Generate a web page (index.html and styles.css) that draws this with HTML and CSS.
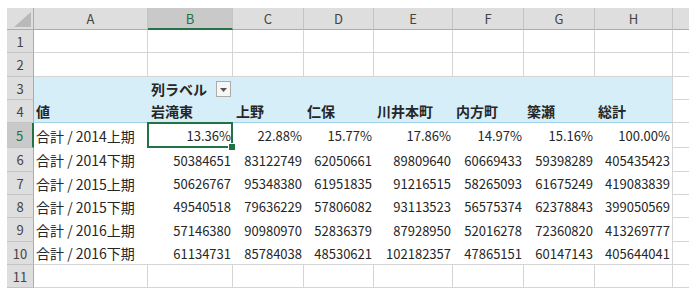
FILE: index.html
```html
<!DOCTYPE html>
<html lang="ja">
<head>
  <meta charset="UTF-8">
  <meta name="viewport" content="width=device-width, initial-scale=1.0">
  <title>ピボットテーブル</title>
  <link rel="stylesheet" href="styles.css">
</head>
<body>
  <div class="sheet">
    <!-- column headers -->
    <div class="corner">
      <svg width="17" height="15" viewBox="0 0 17 15"><polygon points="17,0 17,15 0,15" fill="#b9b9b9"/></svg>
    </div>
    <div class="colhd">A</div>
    <div class="colhd on">B</div>
    <div class="colhd">C</div>
    <div class="colhd">D</div>
    <div class="colhd">E</div>
    <div class="colhd">F</div>
    <div class="colhd">G</div>
    <div class="colhd">H</div>
    <div class="colhd last"></div>

    <!-- row 1 -->
    <div class="rowhd">1</div>
    <div class="c"></div><div class="c"></div><div class="c"></div><div class="c"></div>
    <div class="c"></div><div class="c"></div><div class="c"></div><div class="c"></div>
    <div class="c last"></div>

    <!-- row 2 -->
    <div class="rowhd">2</div>
    <div class="c"></div><div class="c"></div><div class="c"></div><div class="c"></div>
    <div class="c"></div><div class="c"></div><div class="c"></div><div class="c"></div>
    <div class="c last"></div>

    <!-- row 3 : pivot column label -->
    <div class="rowhd">3</div>
    <div class="ph"></div>
    <div class="ph b">列ラベル<span class="dd"><svg width="7" height="4" viewBox="0 0 7 4"><polygon points="0,0 7,0 3.5,4" fill="#555"/></svg></span></div>
    <div class="ph"></div>
    <div class="ph"></div>
    <div class="ph"></div>
    <div class="ph"></div>
    <div class="ph"></div>
    <div class="ph end"></div>
    <div class="c last"></div>

    <!-- row 4 : pivot headings -->
    <div class="rowhd">4</div>
    <div class="ph line b first">値</div>
    <div class="ph line b">岩滝東</div>
    <div class="ph line b">上野</div>
    <div class="ph line b">仁保</div>
    <div class="ph line b">川井本町</div>
    <div class="ph line b">内方町</div>
    <div class="ph line b">簗瀬</div>
    <div class="ph line b end">総計</div>
    <div class="c last"></div>

    <!-- row 5 -->
    <div class="rowhd on">5</div>
    <div class="pv first">合計 / 2014上期</div>
    <div class="pv n sel">13.36%</div>
    <div class="pv n">22.88%</div>
    <div class="pv n">15.77%</div>
    <div class="pv n">17.86%</div>
    <div class="pv n">14.97%</div>
    <div class="pv n">15.16%</div>
    <div class="pv n end">100.00%</div>
    <div class="c last"></div>

    <!-- row 6 -->
    <div class="rowhd">6</div>
    <div class="pv first">合計 / 2014下期</div>
    <div class="pv n">50384651</div>
    <div class="pv n">83122749</div>
    <div class="pv n">62050661</div>
    <div class="pv n">89809640</div>
    <div class="pv n">60669433</div>
    <div class="pv n">59398289</div>
    <div class="pv n end">405435423</div>
    <div class="c last"></div>

    <!-- row 7 -->
    <div class="rowhd">7</div>
    <div class="pv first">合計 / 2015上期</div>
    <div class="pv n">50626767</div>
    <div class="pv n">95348380</div>
    <div class="pv n">61951835</div>
    <div class="pv n">91216515</div>
    <div class="pv n">58265093</div>
    <div class="pv n">61675249</div>
    <div class="pv n end">419083839</div>
    <div class="c last"></div>

    <!-- row 8 -->
    <div class="rowhd">8</div>
    <div class="pv first">合計 / 2015下期</div>
    <div class="pv n">49540518</div>
    <div class="pv n">79636229</div>
    <div class="pv n">57806082</div>
    <div class="pv n">93113523</div>
    <div class="pv n">56575374</div>
    <div class="pv n">62378843</div>
    <div class="pv n end">399050569</div>
    <div class="c last"></div>

    <!-- row 9 -->
    <div class="rowhd">9</div>
    <div class="pv first">合計 / 2016上期</div>
    <div class="pv n">57146380</div>
    <div class="pv n">90980970</div>
    <div class="pv n">52836379</div>
    <div class="pv n">87928950</div>
    <div class="pv n">52016278</div>
    <div class="pv n">72360820</div>
    <div class="pv n end">413269777</div>
    <div class="c last"></div>

    <!-- row 10 -->
    <div class="rowhd">10</div>
    <div class="pv bot first">合計 / 2016下期</div>
    <div class="pv bot n">61134731</div>
    <div class="pv bot n">85784038</div>
    <div class="pv bot n">48530621</div>
    <div class="pv bot n">102182357</div>
    <div class="pv bot n">47865151</div>
    <div class="pv bot n">60147143</div>
    <div class="pv bot n end">405644041</div>
    <div class="c last"></div>

    <!-- row 11 -->
    <div class="rowhd">11</div>
    <div class="c"></div><div class="c"></div><div class="c"></div><div class="c"></div>
    <div class="c"></div><div class="c"></div><div class="c"></div><div class="c"></div>
    <div class="c last"></div>
  </div>
</body>
</html>
```

FILE: styles.css
```css
:root {
  --hd: #dedede;
  --hd-on: #c9c9c9;
  --hd-line: #ababab;
  --grid: #d4d4d4;
  --pivot: #d5eef8;
  --pivot-line: #9fd4ec;
  --green: #217346;
  --text: #262626;
}
* {box-sizing: border-box;}
body {margin: 0; background: #fff; color: var(--text); font-family: "Noto Sans CJK JP", "Noto Sans", sans-serif;}

.sheet {
  display: grid;
  grid-template-columns: 27px 114px 85px 71px 70px 79px 71px 71px 78px 16px;
  grid-template-rows: 22px 23px 24px 23px 23px 25px 24px 23px 23px 24px 23px 23px;
  width: 682px;
  margin: 8px 0 0 7px;
}
.sheet > div {display: flex; align-items: center; white-space: nowrap; overflow: hidden; font-size: 14px; line-height: 1; padding: 0 3px;}

/* headers */
.corner {background: var(--hd); border-right: 1px solid var(--hd-line); border-bottom: 1px solid var(--hd-line); justify-content: flex-end; align-items: flex-end !important; padding: 0 2px 2px 0 !important;}
.colhd {background: var(--hd); border-right: 1px solid #c4c4c4; border-bottom: 1px solid var(--hd-line); justify-content: center; font-size: 13px !important; color: #444;}
.colhd.on {background: var(--hd-on); color: var(--green); border-bottom: 2px solid var(--green);}
.colhd.last {border-right: none;}
.rowhd {background: var(--hd); border-right: 1px solid var(--hd-line); border-bottom: 1px solid #c4c4c4; justify-content: center; font-size: 13px !important; color: #444; padding: 0 !important;}
.rowhd.on {background: var(--hd-on); color: var(--green); border-right: 2px solid var(--green);}

/* plain cells */
.c {border-right: 1px solid var(--grid); border-bottom: 1px solid var(--grid);}
.c.last {border-right: none;}

/* pivot table */
.ph {background: var(--pivot);}
.ph.line {border-bottom: 1px solid var(--pivot-line);}
.b {font-weight: 700;}
.first {padding-left: 2px !important;}
.end {border-right: 1px solid var(--grid);}
.pv.bot {border-bottom: 1px solid var(--grid);}
.n {justify-content: flex-end; font-size: 13px !important; padding: 0 2px 0 0 !important;}

.dd {margin-left: auto; margin-right: -1px; width: 15px; height: 16px; border: 1px solid #ababab; background: #f6f6f6; display: flex; align-items: center; justify-content: center; padding-top: 2px;}

/* active cell */
.sheet > .sel {position: relative; overflow: visible;}
.sel::after {content: ""; position: absolute; left: -1px; top: -1px; right: 0; bottom: 0; border: 2px solid var(--green);}
.sel::before {content: ""; position: absolute; right: -3px; bottom: -3px; width: 6px; height: 6px; background: var(--green); border: 1px solid #fff; z-index: 2;}
```
